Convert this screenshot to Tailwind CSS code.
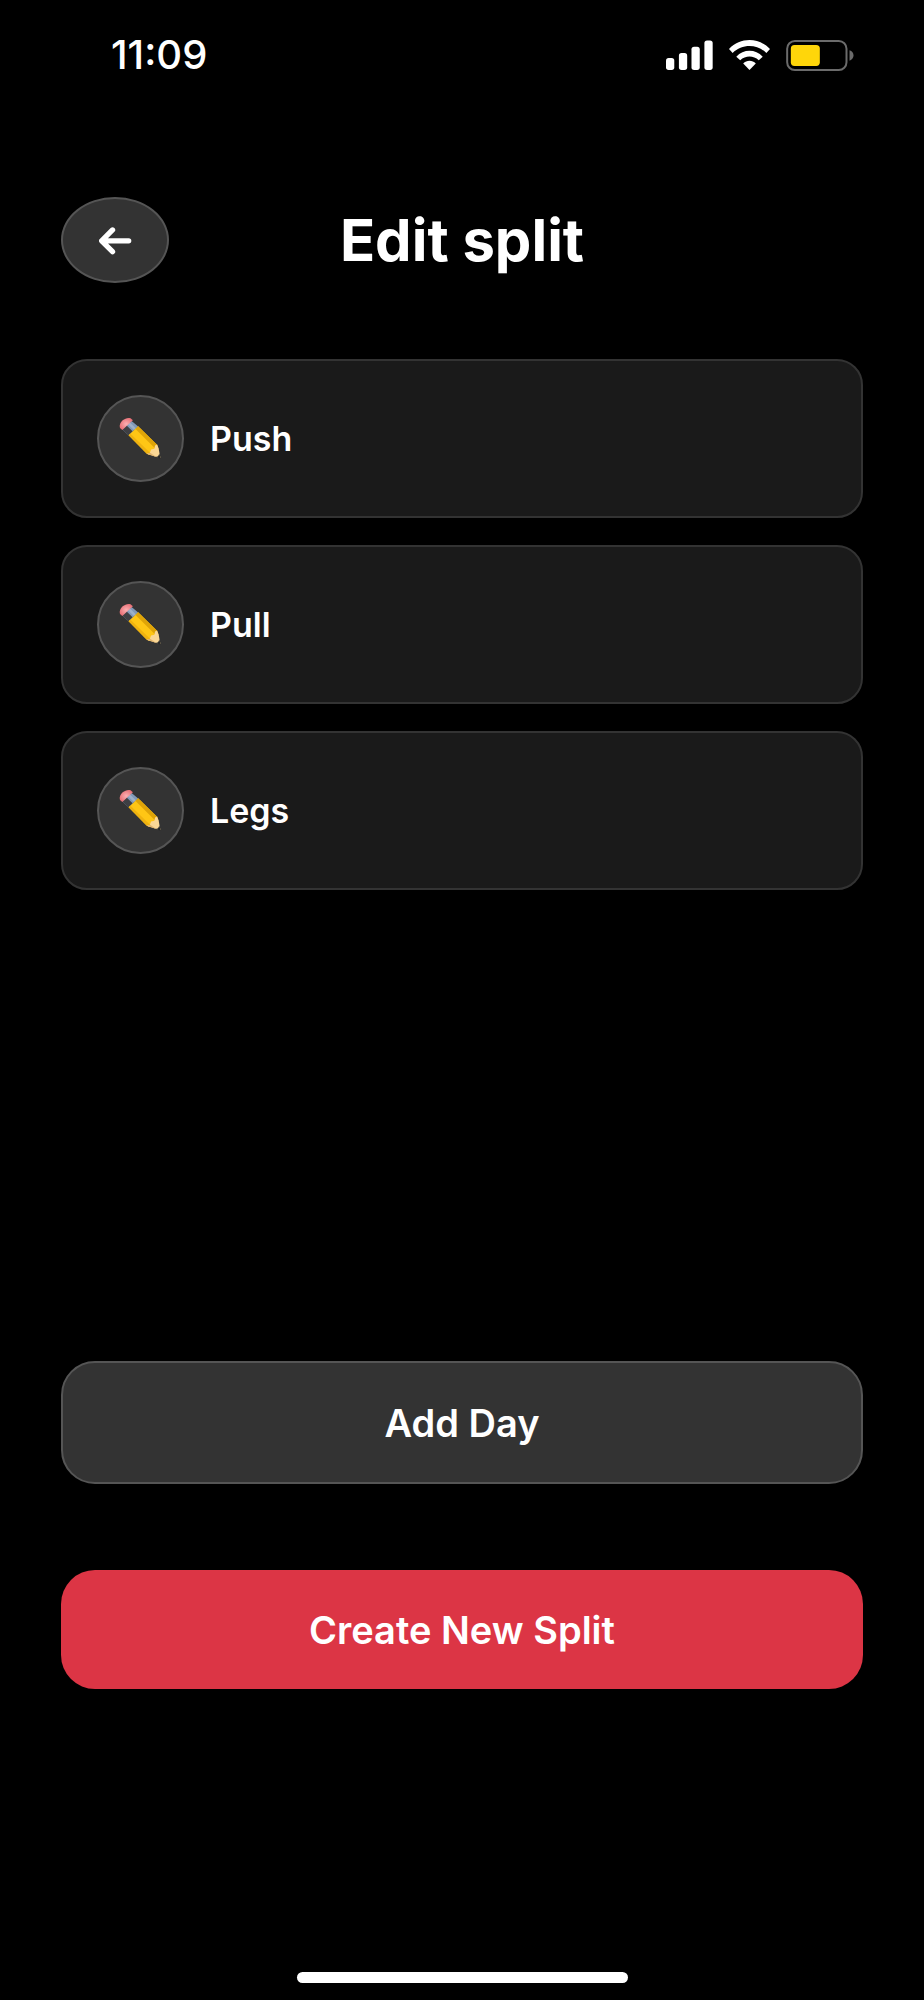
<!DOCTYPE html>
<html lang="en">
<head>
<meta charset="utf-8">
<meta name="viewport" content="width=device-width, initial-scale=1">
<title>Edit split</title>
<script src="https://cdn.jsdelivr.net/npm/@tailwindcss/browser@4"></script>
</head>
<body class="flex min-h-screen flex-col bg-black font-['Inter',sans-serif] text-white">
  <svg class="absolute size-0" aria-hidden="true">
    <defs>
      <radialGradient id="eraser" cx="50%" cy="50%" r="60%">
        <stop offset="0" stop-color="#fcb0b2"/>
        <stop offset="1" stop-color="#e5686f"/>
      </radialGradient>
    </defs>
    <symbol id="pencil" viewBox="0 0 130 130">
      <path d="M38 12 58 29 29 55 10 38Z" fill="#8199b8"/>
      <path d="M23 26 41 43 29 55 10 38Z" fill="#3e3f43"/>
      <path d="M33 17 51 34 45 39 27 22Z" fill="#9db0c9"/>
      <path d="M3 33C0 25 4 17 11 10 18 4 28 1 35 4L42 10 10 39Z" fill="url(#eraser)"/>
      <path d="M58 28 115 84 119 95 95 116 84 111 29 55Z" fill="#ffc615"/>
      <path d="M58 28 115 84 117 92 108 94 50 36Z" fill="#dfa408"/>
      <path d="M29 55 84 111 94 115 96 110 34 50Z" fill="#efb210"/>
      <path d="M115 83 120 95 123 113 126 125 113 121 84 111 93 109 97 98 107 96 109 86Z" fill="#fbd795"/>
      <path d="M84 111 94 108 113 121Z" fill="#e0b36d"/>
      <path d="M122 111 127 127 111 121 118 119Z" fill="#28292b"/>
    </symbol>
  </svg>

  <div class="flex items-center justify-between pt-[30px] pr-[70px] pl-[111px]">
    <time class="text-[40px] leading-[50px] font-medium">11:09</time>
    <div class="flex items-center gap-4">
      <svg class="h-[30px] w-[47px]" viewBox="46 43 142 90" fill="#fff" role="img" aria-label="Signal">
        <rect x="46" y="97" width="25" height="36" rx="8"/>
        <rect x="85" y="82" width="25" height="51" rx="8"/>
        <rect x="123" y="63" width="25" height="70" rx="8"/>
        <rect x="162" y="44" width="25" height="89" rx="8"/>
      </svg>
      <svg class="h-[30px] w-[41px]" viewBox="236 43 124 90" fill="#fff" role="img" aria-label="Wi-Fi">
        <path d="M236 70C270 34 326 34 360 70L349 82C321 54 275 54 247 82Z"/>
        <path d="M258 93C280 69 316 69 338 93L326 104C310 89 286 89 270 104Z"/>
        <path d="M279 114C289 103 307 103 317 114L298 133Z"/>
      </svg>
      <svg class="h-[31px] w-[68px]" viewBox="410 42 203 93" role="img" aria-label="Battery">
        <rect x="413" y="45" width="178" height="87" rx="23" fill="none" stroke="#6b6b6b" stroke-width="6"/>
        <rect x="424" y="57" width="87" height="63" rx="11" fill="#ffd60a"/>
        <path d="M600 73C616 78 616 99 600 104Z" fill="#6b6b6b"/>
      </svg>
    </div>
  </div>

  <header class="mt-[117px] flex items-center px-[61px]">
    <button type="button" aria-label="Back" class="flex h-[86px] w-[108px] items-center justify-center rounded-[50%] border-2 border-[#555] bg-[#333]">
      <svg class="h-[29px] w-[33px]" viewBox="144 124 100 86" fill="none" stroke="#fff" stroke-width="16" stroke-linecap="round" stroke-linejoin="round" aria-hidden="true">
        <path d="M234 168H154M185 135 152 168 185 201"/>
      </svg>
    </button>
    <h1 class="flex-1 text-center text-[58px] leading-[72px] font-bold">Edit split</h1>
    <div class="w-[108px]"></div>
  </header>

  <main class="flex flex-1 flex-col px-[61px] pt-[76px]">
    <ul class="flex flex-1 flex-col gap-[27px]">
      <li class="flex items-center gap-[26px] rounded-[26px] border-2 border-[#333] bg-[#1a1a1a] p-[34px]">
        <button type="button" aria-label="Edit Push" class="flex size-[87px] items-center justify-center rounded-full border-2 border-[#555] bg-[#333]"><svg class="size-[43px]" aria-hidden="true"><use href="#pencil"/></svg></button>
        <span class="text-[34px] leading-[42px] font-semibold">Push</span>
      </li>
      <li class="flex items-center gap-[26px] rounded-[26px] border-2 border-[#333] bg-[#1a1a1a] p-[34px]">
        <button type="button" aria-label="Edit Pull" class="flex size-[87px] items-center justify-center rounded-full border-2 border-[#555] bg-[#333]"><svg class="size-[43px]" aria-hidden="true"><use href="#pencil"/></svg></button>
        <span class="text-[34px] leading-[42px] font-semibold">Pull</span>
      </li>
      <li class="flex items-center gap-[26px] rounded-[26px] border-2 border-[#333] bg-[#1a1a1a] p-[34px]">
        <button type="button" aria-label="Edit Legs" class="flex size-[87px] items-center justify-center rounded-full border-2 border-[#555] bg-[#333]"><svg class="size-[43px]" aria-hidden="true"><use href="#pencil"/></svg></button>
        <span class="text-[34px] leading-[42px] font-semibold">Legs</span>
      </li>
    </ul>
    <button type="button" class="h-[123px] rounded-[34px] border-2 border-[#555] bg-[#333] text-[38px] leading-[48px] font-semibold">Add Day</button>
    <button type="button" class="mt-[86px] h-[119px] rounded-[34px] bg-[#dc3545] text-[38px] leading-[48px] font-semibold">Create New Split</button>
  </main>

  <footer class="flex justify-center pt-[283px] pb-[17px]">
    <div class="h-[11px] w-[331px] rounded-full bg-white"></div>
  </footer>
</body>
</html>
